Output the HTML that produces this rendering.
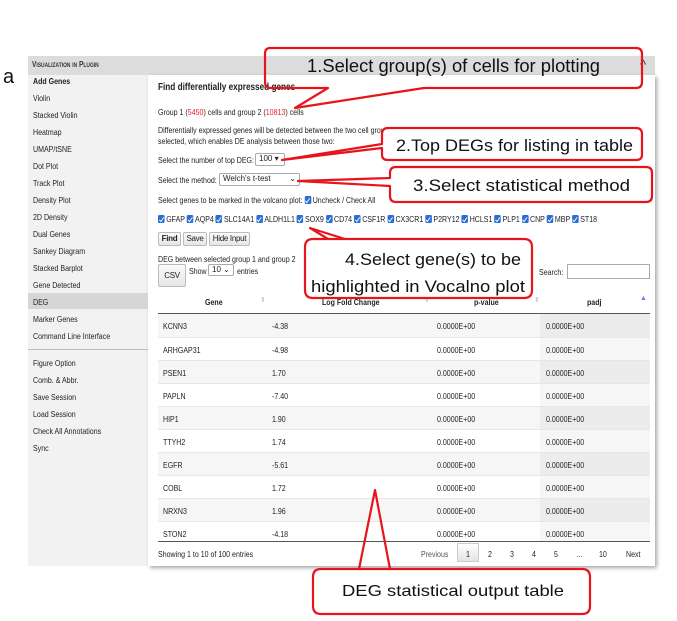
<!DOCTYPE html>
<html><head><meta charset="utf-8"><style>
*{margin:0;padding:0;box-sizing:border-box}
body{width:677px;height:621px;background:#fff;position:relative;overflow:hidden;font-family:"Liberation Sans",sans-serif;font-size:8.6px;color:#222}
.a{position:absolute;white-space:nowrap}
.t{transform:scaleX(.82);transform-origin:0 0}
#side{position:absolute;left:28px;top:75px;width:120px;height:491px;background:#f2f2f2}
#hdr{position:absolute;left:28px;top:56px;width:627px;height:19px;background:#dcdcdc}
#main{position:absolute;left:148px;top:75px;width:507px;height:491px;background:#fff;box-shadow:2px 2px 4px rgba(0,0,0,.35)}
.si{position:absolute;left:33px;transform:scaleX(.82);transform-origin:0 0;white-space:nowrap}
.red{color:#e22}
.cb{display:inline-block;width:8px;height:8px;background:#2a6fd6;border-radius:1.5px;vertical-align:-1px;margin-right:2px;position:relative}
.cb:after{content:"";position:absolute;left:2.5px;top:0.5px;width:2px;height:4.5px;border:solid #fff;border-width:0 1.3px 1.3px 0;transform:rotate(40deg)}
.btn{position:absolute;border:1px solid #bbb;background:linear-gradient(#fafafa,#e6e6e6);border-radius:2px;text-align:center;font-size:8px;white-space:nowrap;letter-spacing:-.3px}
.sel{position:absolute;border:1px solid #aaa;background:#fff;border-radius:2px;padding-left:3px;white-space:nowrap;font-size:8px}
.row{position:absolute;left:158px;width:492px;height:23px}
.row span{position:absolute;top:7px;transform:scaleX(.82);transform-origin:0 0}
</style></head><body>
<div class="a" style="left:3px;top:66px;font-size:20px;color:#111">a</div>
<div id="hdr"></div>
<div class="a t" style="left:32px;top:60px;font-size:8px;font-weight:bold;color:#333;font-variant:small-caps">Visualization in Plugin</div>
<div id="side"></div>
<div id="main"></div>
<div class="a" style="left:640px;top:57px;font-size:13px;color:#333">^</div>
<div class="si" style="top:76px;font-weight:bold">Add Genes</div>
<div class="si" style="top:93px">Violin</div>
<div class="si" style="top:110px">Stacked Violin</div>
<div class="si" style="top:127px">Heatmap</div>
<div class="si" style="top:144px">UMAP/tSNE</div>
<div class="si" style="top:161px">Dot Plot</div>
<div class="si" style="top:178px">Track Plot</div>
<div class="si" style="top:195px">Density Plot</div>
<div class="si" style="top:212px">2D Density</div>
<div class="si" style="top:229px">Dual Genes</div>
<div class="si" style="top:246px">Sankey Diagram</div>
<div class="si" style="top:263px">Stacked Barplot</div>
<div class="si" style="top:280px">Gene Detected</div>
<div class="a" style="left:28px;top:293px;width:120px;height:16px;background:#d6d6d6"></div>
<div class="si" style="top:297px">DEG</div>
<div class="si" style="top:314px">Marker Genes</div>
<div class="si" style="top:331px">Command Line Interface</div>
<div class="a" style="left:28px;top:349px;width:120px;height:1px;background:#bbb"></div>
<div class="si" style="top:358px">Figure Option</div>
<div class="si" style="top:375px">Comb. &amp; Abbr.</div>
<div class="si" style="top:392px">Save Session</div>
<div class="si" style="top:409px">Load Session</div>
<div class="si" style="top:426px">Check All Annotations</div>
<div class="si" style="top:443px">Sync</div>

<div class="a t" style="left:158px;top:82px;font-weight:bold;font-size:10px">Find differentially expressed genes</div>
<div class="a t" style="left:158px;top:107px">Group 1 (<span class="red">5450</span>) cells and group 2 (<span class="red">10813</span>) cells</div>
<div class="a t" style="left:158px;top:125px">Differentially expressed genes will be detected between the two cell groups defined above, unless two categories of the 'Custom_combine' annotation are</div>
<div class="a t" style="left:158px;top:136px">selected, which enables DE analysis between those two:</div>
<div class="a t" style="left:158px;top:155px">Select the number of top DEG:</div>
<div class="sel a" style="left:255px;top:153px;width:30px;height:13px">100 ▾</div>
<div class="a t" style="left:158px;top:175px">Select the method:</div>
<div class="sel a" style="left:219px;top:173px;width:81px;height:13px">Welch's t-test <span style="float:right;margin-right:3px">⌄</span></div>
<div class="a t" style="left:158px;top:195px">Select genes to be marked in the volcano plot: <span class="cb"></span>Uncheck / Check All</div>
<div class="a t" style="left:158px;top:214px"><span class="cb"></span>GFAP <span class="cb"></span>AQP4 <span class="cb"></span>SLC14A1 <span class="cb"></span>ALDH1L1 <span class="cb"></span>SOX9 <span class="cb"></span>CD74 <span class="cb"></span>CSF1R <span class="cb"></span>CX3CR1 <span class="cb"></span>P2RY12 <span class="cb"></span>HCLS1 <span class="cb"></span>PLP1 <span class="cb"></span>CNP <span class="cb"></span>MBP <span class="cb"></span>ST18</div>
<div class="btn" style="left:158px;top:232px;width:23px;height:14px;line-height:12px;font-weight:bold">Find</div>
<div class="btn" style="left:183px;top:232px;width:24px;height:14px;line-height:12px">Save</div>
<div class="btn" style="left:209px;top:232px;width:41px;height:14px;line-height:12px">Hide Input</div>
<div class="a t" style="left:158px;top:254px">DEG between selected group 1 and group 2</div>
<div class="btn" style="left:158px;top:264px;width:28px;height:23px;line-height:21px">CSV</div>
<div class="a t" style="left:189px;top:266px">Show</div>
<div class="sel a" style="left:208px;top:264px;width:26px;height:12px">10 ⌄</div>
<div class="a t" style="left:237px;top:266px">entries</div>
<div class="a t" style="left:539px;top:267px">Search:</div>
<div class="a" style="left:567px;top:264px;width:83px;height:15px;border:1px solid #aaa"></div>

<div class="a t" style="left:205px;top:297px;font-weight:bold">Gene</div>
<div class="a" style="left:260px;top:296px;color:#ccc;font-size:7px">⬍</div>
<div class="a t" style="left:322px;top:297px;font-weight:bold">Log Fold Change</div>
<div class="a" style="left:424px;top:296px;color:#ccc;font-size:7px">⬍</div>
<div class="a t" style="left:474px;top:297px;font-weight:bold">p-value</div>
<div class="a" style="left:534px;top:296px;color:#ccc;font-size:7px">⬍</div>
<div class="a t" style="left:587px;top:297px;font-weight:bold">padj</div>
<div class="a" style="left:640px;top:295px;color:#7a7ae0;font-size:7px">▲</div>
<div class="a" style="left:158px;top:313px;width:492px;height:1px;background:#555"></div>

<div class="row" style="top:314px;background:#f6f6f6"><div class="a" style="left:382px;width:110px;height:23px;background:#ececec"></div><span style="left:5px">KCNN3</span><span style="left:114px">-4.38</span><span style="left:279px">0.0000E+00</span><span style="left:388px">0.0000E+00</span></div>
<div class="row" style="top:337px;border-top:1px solid #e6e6e6"><div class="a" style="left:382px;width:110px;height:23px;background:#f6f6f6"></div><span style="left:5px">ARHGAP31</span><span style="left:114px">-4.98</span><span style="left:279px">0.0000E+00</span><span style="left:388px">0.0000E+00</span></div>
<div class="row" style="top:360px;background:#f6f6f6;border-top:1px solid #e6e6e6"><div class="a" style="left:382px;width:110px;height:23px;background:#ececec"></div><span style="left:5px">PSEN1</span><span style="left:114px">1.70</span><span style="left:279px">0.0000E+00</span><span style="left:388px">0.0000E+00</span></div>
<div class="row" style="top:383px;border-top:1px solid #e6e6e6"><div class="a" style="left:382px;width:110px;height:23px;background:#f6f6f6"></div><span style="left:5px">PAPLN</span><span style="left:114px">-7.40</span><span style="left:279px">0.0000E+00</span><span style="left:388px">0.0000E+00</span></div>
<div class="row" style="top:406px;background:#f6f6f6;border-top:1px solid #e6e6e6"><div class="a" style="left:382px;width:110px;height:23px;background:#ececec"></div><span style="left:5px">HIP1</span><span style="left:114px">1.90</span><span style="left:279px">0.0000E+00</span><span style="left:388px">0.0000E+00</span></div>
<div class="row" style="top:429px;border-top:1px solid #e6e6e6"><div class="a" style="left:382px;width:110px;height:23px;background:#f6f6f6"></div><span style="left:5px">TTYH2</span><span style="left:114px">1.74</span><span style="left:279px">0.0000E+00</span><span style="left:388px">0.0000E+00</span></div>
<div class="row" style="top:452px;background:#f6f6f6;border-top:1px solid #e6e6e6"><div class="a" style="left:382px;width:110px;height:23px;background:#ececec"></div><span style="left:5px">EGFR</span><span style="left:114px">-5.61</span><span style="left:279px">0.0000E+00</span><span style="left:388px">0.0000E+00</span></div>
<div class="row" style="top:475px;border-top:1px solid #e6e6e6"><div class="a" style="left:382px;width:110px;height:23px;background:#f6f6f6"></div><span style="left:5px">COBL</span><span style="left:114px">1.72</span><span style="left:279px">0.0000E+00</span><span style="left:388px">0.0000E+00</span></div>
<div class="row" style="top:498px;background:#f6f6f6;border-top:1px solid #e6e6e6"><div class="a" style="left:382px;width:110px;height:23px;background:#ececec"></div><span style="left:5px">NRXN3</span><span style="left:114px">1.96</span><span style="left:279px">0.0000E+00</span><span style="left:388px">0.0000E+00</span></div>
<div class="row" style="top:521px;border-top:1px solid #e6e6e6"><div class="a" style="left:382px;width:110px;height:20px;background:#f6f6f6"></div><span style="left:5px">STON2</span><span style="left:114px">-4.18</span><span style="left:279px">0.0000E+00</span><span style="left:388px">0.0000E+00</span></div>
<div class="a" style="left:158px;top:541px;width:492px;height:1px;background:#555"></div>
<div class="a t" style="left:158px;top:549px">Showing 1 to 10 of 100 entries</div>
<div class="a" style="left:457px;top:543px;width:22px;height:19px;border:1px solid #ccc;background:linear-gradient(#fff,#e4e4e4)"></div>
<div class="a t" style="left:421px;top:549px;color:#555">Previous</div>
<div class="a t" style="left:466px;top:549px">1</div>
<div class="a t" style="left:488px;top:549px">2</div>
<div class="a t" style="left:510px;top:549px">3</div>
<div class="a t" style="left:532px;top:549px">4</div>
<div class="a t" style="left:554px;top:549px">5</div>
<div class="a t" style="left:576px;top:549px">…</div>
<div class="a t" style="left:599px;top:549px">10</div>
<div class="a t" style="left:626px;top:549px">Next</div>

<svg class="a" style="left:0;top:0" width="677" height="621" viewBox="0 0 677 621" font-family="Liberation Sans, sans-serif" fill="#111">
<g fill="#fff" stroke="#e8141c" stroke-width="2.2" stroke-linejoin="round">
<path d="M388 128 H636 Q642 128 642 134 V155 Q642 160 636 160 H388 Q382 160 382 155 V148 L282 160 L382 144 V134 Q382 128 388 128 Z"/>
<path d="M396 167 H646 Q652 167 652 173 V196 Q652 202 646 202 H396 Q390 202 390 196 V186 L298 181 L390 178 V173 Q390 167 396 167 Z"/>
<path d="M313 239 H524 Q532 239 532 247 V290 Q532 298 524 298 H313 Q305 298 305 290 V247 Q305 239 313 239 Z"/>
<path d="M321 569 H582 Q590 569 590 577 V606 Q590 614 582 614 H321 Q313 614 313 606 V577 Q313 569 321 569 Z"/>
</g>
<g fill="none" stroke="#e8141c" stroke-width="2.2" stroke-linejoin="round">
<path d="M270 48 H636 Q642 48 642 54 V82 Q642 88 636 88 H424 L295 108 L328 88 H271 Q265 88 265 82 V54 Q265 48 270 48 Z"/>
<path d="M328 239 L310 228 L345 239"/>
<path d="M359 569 L375 490 L390 569"/>
</g>
<text x="307" y="72" font-size="18" textLength="293" lengthAdjust="spacingAndGlyphs">1.Select group(s) of cells for plotting</text>
<text x="396" y="151" font-size="17" textLength="237" lengthAdjust="spacingAndGlyphs">2.Top DEGs for listing in table</text>
<text x="413" y="191" font-size="17" textLength="217" lengthAdjust="spacingAndGlyphs">3.Select statistical method</text>
<text x="345" y="265" font-size="17" textLength="176" lengthAdjust="spacingAndGlyphs">4.Select gene(s) to be</text>
<text x="311" y="292" font-size="17" textLength="214" lengthAdjust="spacingAndGlyphs">highlighted in Vocalno plot</text>
<text x="342" y="596" font-size="16" textLength="222" lengthAdjust="spacingAndGlyphs">DEG statistical output table</text>
</svg>
</body></html>
